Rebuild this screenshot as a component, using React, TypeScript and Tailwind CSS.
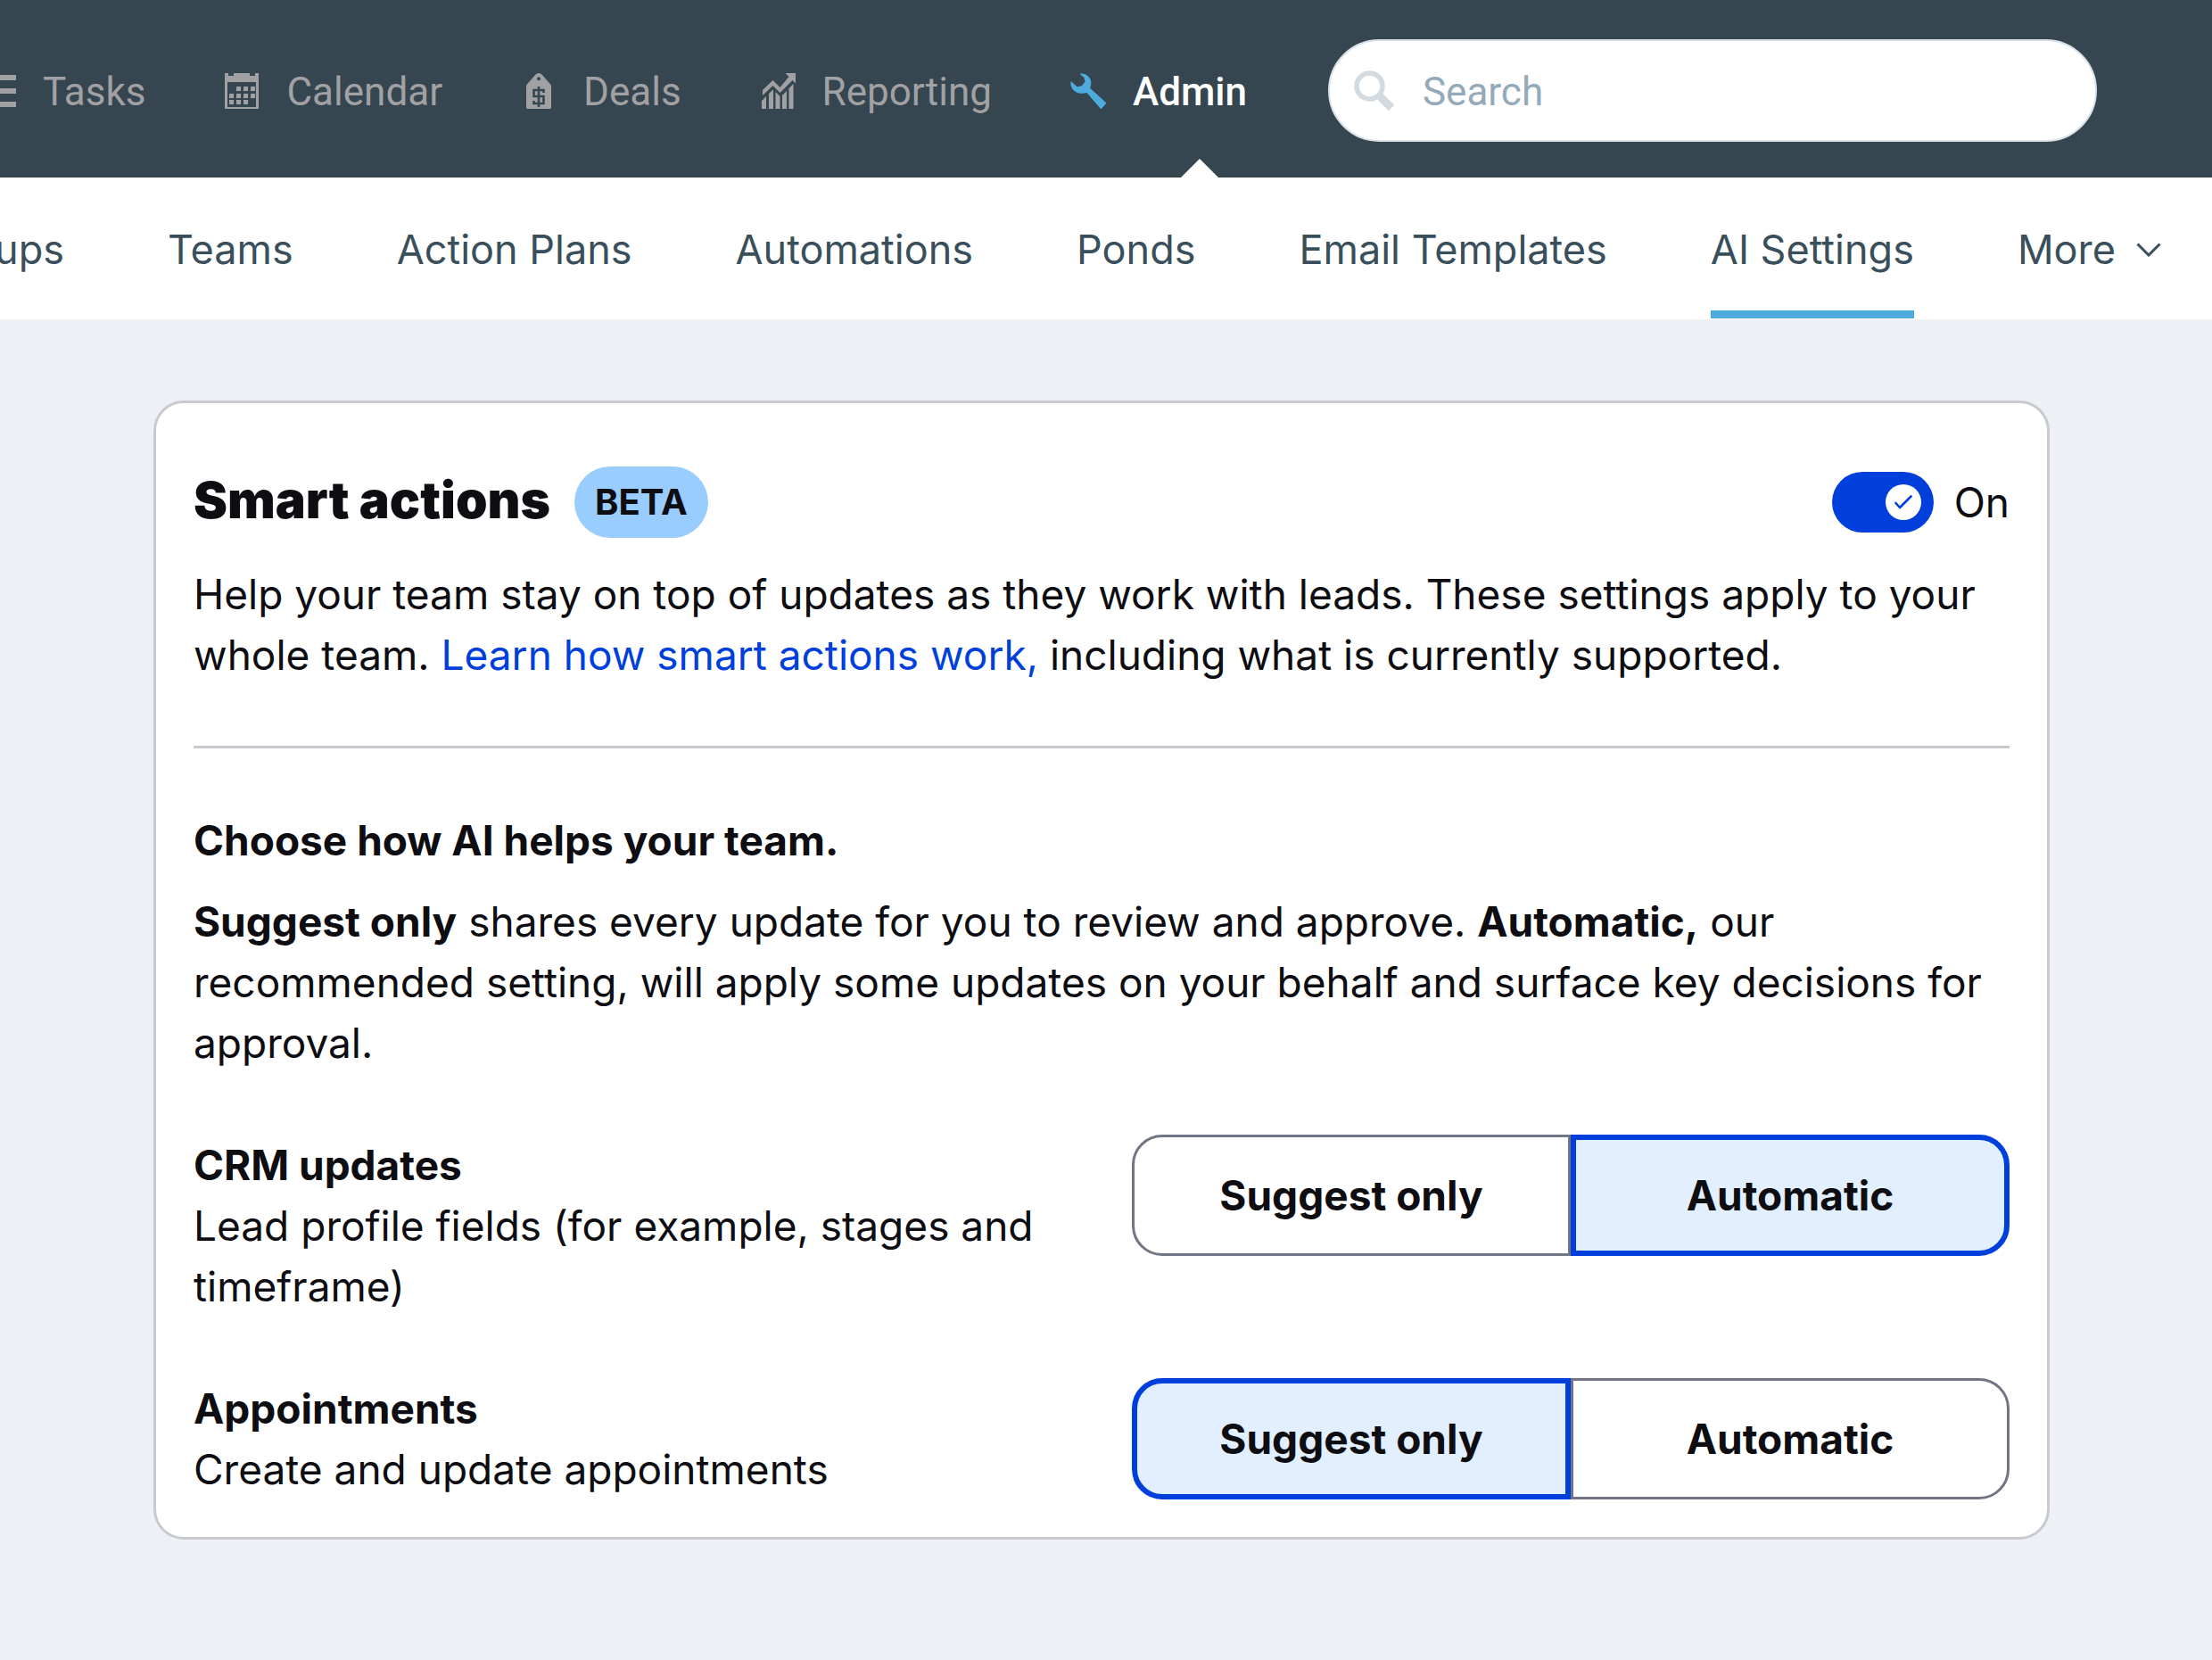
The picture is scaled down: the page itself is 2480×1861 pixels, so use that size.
import React from "react";

function TasksIcon() {
  return (
    <svg viewBox="0 0 18 40" className="h-10 w-[18px]" fill="currentColor" aria-hidden="true">
      <path d="M0 2h18v6H0zM0 17h18v6H0zM0 32h18v6H0z" />
    </svg>
  );
}

function CalendarIcon() {
  return (
    <svg viewBox="0 0 40 40" className="size-10" fill="currentColor" aria-hidden="true">
      <path
        fillRule="evenodd"
        d="M1 0h4v3h6V0h18v3h6V0h4v40H1zM4 10v28h32V10z"
      />
      <path d="M14 15h5v5h-5zM22 15h5v5h-5zM30 15h5v5h-5zM6 23h5v5H6zM14 23h5v5h-5zM22 23h5v5h-5zM30 23h5v5h-5zM6 30h5v5H6zM14 30h5v5h-5zM22 30h5v5h-5z" />
    </svg>
  );
}

function DealsIcon() {
  return (
    <svg viewBox="0 0 40 40" className="size-10" aria-hidden="true">
      <path
        fill="currentColor"
        fillRule="evenodd"
        d="M16.500 1.500Q20-1.500 23.500 1.500L33.500 13Q34 13.800 34 15V38.500Q34 40 32.500 40H7.500Q6 40 6 38.500V15Q6 13.800 6.500 13ZM20 4.200a2 2 0 1 0 0 4a2 2 0 0 0 0-4Z"
      />
      <path
        fill="none"
        stroke="#354650"
        strokeWidth="2.600"
        d="M20 15v23M25.500 22v-3H14.500v7h11v8H14.500v-3"
      />
    </svg>
  );
}

function ReportingIcon() {
  return (
    <svg viewBox="0 0 40 40" className="size-10" fill="currentColor" aria-hidden="true">
      <path d="M2 31l5-5v14H2zM10 23l4.500-4.500L15 19v21h-5zM17.500 21l5 5v14h-5zM25 25l5-5v20h-5zM32.500 17l5-5v28h-5z" />
      <path d="M28.500 0H40v11.500l-3.500-3.500L22.500 22L14.500 14L3 25V19L14.500 8L22.500 16L32.500 4Z" />
    </svg>
  );
}

function WrenchIcon() {
  return (
    <svg viewBox="0 0 40 40" className="size-10 text-[#4dabde]" fill="currentColor" aria-hidden="true">
      <path d="M10.500 0.800C16-1 22.500 3.500 23.200 9.500C23.500 12.500 22.500 15 22.300 17L40.500 33.500L34.500 40.500L18.300 21.800C15 23 8.500 24 4 19.500C0.800 16.200-0.300 12.500 0.800 9L7.500 15.300L12.800 14.200L16.500 9.500L15.500 5Z" />
    </svg>
  );
}

function SearchIcon() {
  return (
    <svg viewBox="0 0 46 46" className="size-[46px] text-[#d3dbe1]" fill="none" stroke="currentColor" aria-hidden="true">
      <circle cx="17.500" cy="17.500" r="14.500" strokeWidth="5.500" />
      <path d="M27.500 27.500l14.500 14.500" strokeWidth="9" />
    </svg>
  );
}

const mainNav = [
  { label: "Tasks", Icon: TasksIcon },
  { label: "Calendar", Icon: CalendarIcon },
  { label: "Deals", Icon: DealsIcon },
  { label: "Reporting", Icon: ReportingIcon },
  { label: "Admin", Icon: WrenchIcon, active: true },
];

const subNav = ["Teams", "Action Plans", "Automations", "Ponds", "Email Templates", "AI Settings"];

function Segment({ name, options, value }: { name: string; options: string[]; value: string }) {
  return (
    <div role="radiogroup" aria-labelledby={name} className="grid h-[136px] grid-cols-2">
      {options.map((option) => (
        <label
          key={option}
          className="relative flex cursor-pointer items-center justify-center border-[3px] border-[#717483] bg-white font-bold first:rounded-l-[34px] last:rounded-r-[34px] has-checked:border-[6px] has-checked:border-[#003fdc] has-checked:bg-[#e1efff]"
        >
          <input
            type="radio"
            name={name}
            value={option}
            defaultChecked={option === value}
            className="absolute inset-0 cursor-pointer appearance-none"
          />
          {option}
        </label>
      ))}
    </div>
  );
}

function SettingRow({ name, title, description, value }: { name: string; title: string; description: string; value: string }) {
  return (
    <div className="mt-[69px] grid grid-cols-2 items-start gap-[68px]">
      <div>
        <h3 id={name} className="font-bold">
          {title}
        </h3>
        <p>{description}</p>
      </div>
      <Segment name={name} options={["Suggest only", "Automatic"]} value={value} />
    </div>
  );
}

export default function App() {
  return (
    <div className="min-h-screen overflow-x-hidden bg-[#edf1f6] font-['Inter',sans-serif] text-[46px] leading-[68px] text-[#0d0d12]">
      <header className="flex h-[199px] items-center bg-[#354650] pt-1 pr-[129px] font-['Roboto',sans-serif] text-[44px] text-[#a1a1a4]">
        <nav aria-label="Main" className="flex h-full items-center gap-[88px]">
          {mainNav.map(({ label, Icon, active }) => (
            <a
              key={label}
              href="#"
              aria-current={active ? "page" : undefined}
              className="relative flex h-full items-center gap-[30px] aria-[current=page]:font-medium aria-[current=page]:text-white"
            >
              <Icon />
              <span className="pt-0.5">{label}</span>
              {active && (
                <svg viewBox="0 0 42 21" className="absolute right-8 bottom-0 h-[21px] w-[42px]" aria-hidden="true">
                  <path d="M21 0l21 21H0z" fill="#ffffff" />
                </svg>
              )}
            </a>
          ))}
        </nav>
        <div className="ml-[91px] flex h-[115px] flex-1 items-center gap-[31px] rounded-full border-2 border-[#d9e0e8] bg-white pl-[27px]">
          <SearchIcon />
          <input
            type="search"
            aria-label="Search"
            placeholder="Search"
            className="min-w-0 flex-1 bg-transparent pt-0.5 outline-none placeholder:text-[#94aab9]"
          />
        </div>
      </header>

      <nav aria-label="Admin sections" className="flex h-[159px] items-stretch gap-[116px] bg-white text-[45px] whitespace-nowrap text-[#3a4f5c]">
        <a href="#" className="flex w-[72px] items-center justify-end pt-0.5">
          ups
        </a>
        {subNav.map((label) => (
          <a
            key={label}
            href="#"
            aria-current={label === "AI Settings" ? "page" : undefined}
            className="relative flex items-center pt-0.5 aria-[current=page]:after:absolute aria-[current=page]:after:inset-x-0 aria-[current=page]:after:bottom-px aria-[current=page]:after:h-[9px] aria-[current=page]:after:bg-[#4dabde]"
          >
            {label}
          </a>
        ))}
        <button type="button" className="flex items-center gap-[23px] pt-0.5">
          More
          <svg viewBox="0 0 28 16" className="h-4 w-7" fill="none" stroke="currentColor" strokeWidth="3" aria-hidden="true">
            <path d="M1.500 1.500L14 14L26.500 1.500" />
          </svg>
        </button>
      </nav>

      <main className="pt-[91px] pr-[182px] pb-[92px] pl-[172px]">
        <section className="rounded-[34px] border-[3px] border-[#c9c9d0] bg-white px-[42px] pt-[71px] pb-[42px]">
          <div className="flex h-20 items-center">
            <h1 className="pb-1 text-[57px] font-black">Smart actions</h1>
            <span className="ml-[27px] flex h-20 items-center rounded-full bg-[#99ccff] px-[23px] text-[40px] font-bold">
              BETA
            </span>
            <label className="relative ml-auto flex cursor-pointer items-center gap-[23px]">
              <input
                type="checkbox"
                role="switch"
                defaultChecked
                className="peer absolute inset-0 cursor-pointer appearance-none"
              />
              <span className="flex h-[68px] w-[114px] items-center justify-start rounded-full bg-[#717483] px-[14px] peer-checked:justify-end peer-checked:bg-[#003fdc]">
                <span className="flex size-10 items-center justify-center rounded-full bg-white">
                  <svg viewBox="0 0 20 16" className="h-4 w-5" fill="none" stroke="#003fdc" strokeWidth="2.600" strokeLinecap="round" strokeLinejoin="round" aria-hidden="true">
                    <path d="M1.500 9L6 14L18.500 1.500" />
                  </svg>
                </span>
              </span>
              On
            </label>
          </div>
          <p className="mt-[29px]">
            Help your team stay on top of updates as they work with leads. These settings apply to your whole team.{" "}
            <a href="#" className="text-[#003fdc]">
              Learn how smart actions work,
            </a>{" "}
            including what is currently supported.
          </p>

          <hr className="mt-[68px] border-t-[3px] border-[#c9c9d0]" />

          <h2 className="mt-[69px] font-bold">Choose how AI helps your team.</h2>
          <p className="mt-[23px]">
            <strong>Suggest only</strong> shares every update for you to review and approve. <strong>Automatic,</strong> our
            recommended setting, will apply some updates on your behalf and surface key decisions for approval.
          </p>

          <SettingRow
            name="crm-updates"
            title="CRM updates"
            description="Lead profile fields (for example, stages and timeframe)"
            value="Automatic"
          />
          <SettingRow
            name="appointments"
            title="Appointments"
            description="Create and update appointments"
            value="Suggest only"
          />
        </section>
      </main>
    </div>
  );
}
